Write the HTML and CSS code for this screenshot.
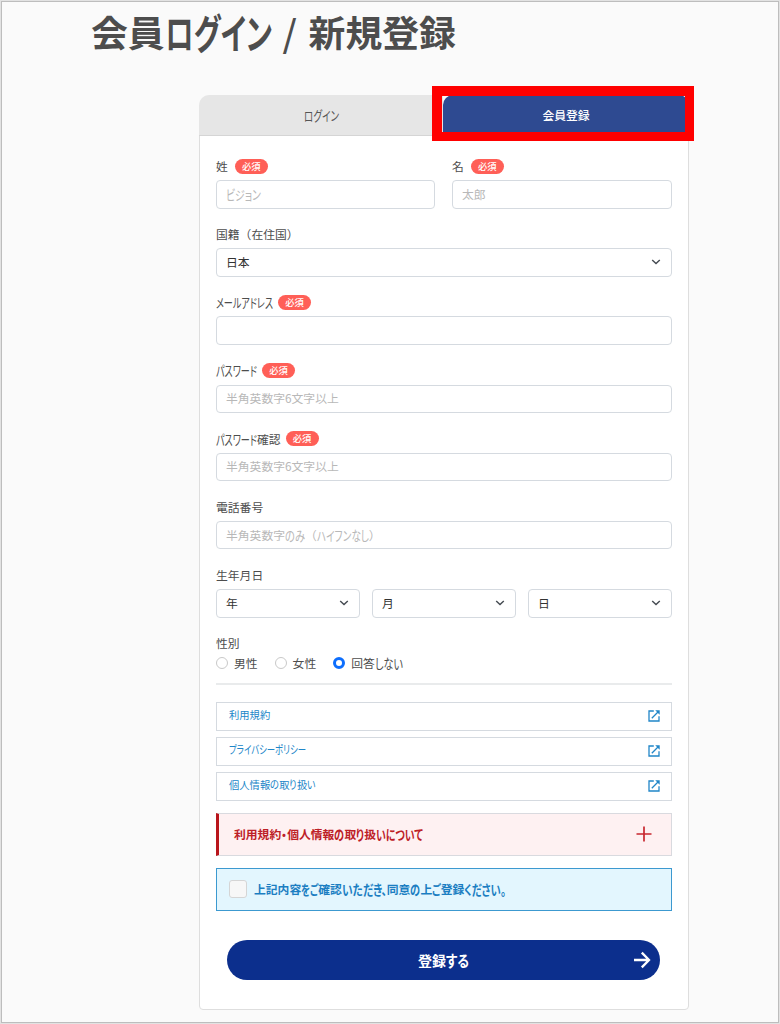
FILE: index.html
```html
<!DOCTYPE html>
<html lang="ja">
<head>
<meta charset="utf-8">
<title>会員ログイン / 新規登録</title>
<link rel="stylesheet" href="styles.css">
</head>
<body>
<svg class="defs" aria-hidden="true">
  <symbol id="chev" viewBox="0 0 10 6"><path d="M1.2 1 5 4.6 8.8 1" fill="none" stroke="#454b52" stroke-width="1.4"/></symbol>
  <symbol id="ext" viewBox="0 0 12 12"><path d="M5.8 1H1v10h10V6.2M3.8 8.2 10 2" fill="none" stroke="#2186c8" stroke-width="1.3"/><path d="M7.2.3h4.5v4.5L10.4 3.5 8.5 1.6z" fill="#2186c8"/></symbol>
</svg>
<main class="page">
  <h1 class="title">会員<span class="k" data-w="107">ログイン</span><span class="slash">/</span>新規登録</h1>
  <div class="card">
    <nav class="tabs">
      <a class="tab"><span class="k" data-w="35">ログイン</span></a>
      <a class="tab active">会員登録</a>
      <div class="highlight"></div>
    </nav>
    <form class="form">
      <div class="row name">
        <div><label class="label">姓<b class="badge">必須</b></label><div class="input ph"><span class="k" data-w="35">ビジョン</span></div></div>
        <div><label class="label">名<b class="badge">必須</b></label><div class="input ph">太郎</div></div>
      </div>
      <div class="row"><label class="label">国籍（在住国）</label><div class="input">日本<svg class="chev"><use href="#chev"/></svg></div></div>
      <div class="row"><label class="label"><span class="k" data-w="57">メールアドレス</span><b class="badge tight">必須</b></label><div class="input"></div></div>
      <div class="row"><label class="label"><span class="k" data-w="41">パスワード</span><b class="badge tight">必須</b></label><div class="input ph">半角英数字6文字以上</div></div>
      <div class="row"><label class="label"><span class="k" data-w="41">パスワード</span>確認<b class="badge tight">必須</b></label><div class="input ph">半角英数字6文字以上</div></div>
      <div class="row"><label class="label">電話番号</label><div class="input ph">半角英数字<span class="k" data-w="20">のみ</span>（<span class="k" data-w="52">ハイフンなし</span>）</div></div>
      <div class="row"><label class="label">生年月日</label>
        <div class="dates">
          <div class="input">年<svg class="chev"><use href="#chev"/></svg></div>
          <div class="input">月<svg class="chev"><use href="#chev"/></svg></div>
          <div class="input">日<svg class="chev"><use href="#chev"/></svg></div>
        </div>
      </div>
      <label class="label">性別</label>
      <div class="radios">
        <span class="radio"><i></i>男性</span>
        <span class="radio"><i></i>女性</span>
        <span class="radio on"><i></i>回答<span class="k" data-w="28">しない</span></span>
      </div>
      <div class="rule"></div>
      <div class="links">
        <a>利用規約<svg class="ext"><use href="#ext"/></svg></a>
        <a><span class="k" data-w="77">プライバシーポリシー</span><svg class="ext"><use href="#ext"/></svg></a>
        <a>個人情報<span class="k" data-w="9">の</span>取<span class="k" data-w="7.5">り</span>扱<span class="k" data-w="8.5">い</span><svg class="ext"><use href="#ext"/></svg></a>
      </div>
      <div class="notice">利用規約<span class="k" data-w="6">・</span>個人情報<span class="k" data-w="10">の</span>取<span class="k" data-w="8">り</span>扱<span class="k" data-w="47">いについて</span><svg class="plus" viewBox="0 0 16 16"><path d="M8 .5v15M.5 8h15" stroke="#c8272f" stroke-width="1.7"/></svg></div>
      <div class="agree"><i class="box"></i>上記内容<span class="k" data-w="17">をご</span>確認<span class="k" data-w="45">いただき、</span>同意<span class="k" data-w="10">の</span>上<span class="k" data-w="8.5">ご</span>登録<span class="k" data-w="42">ください。</span></div>
      <div class="submit">登録<span class="k" data-w="23">する</span><svg class="arrow" viewBox="0 0 18 18"><path d="M1 9h15M8.8 1.6 16 9l-7.2 7.4" fill="none" stroke="#fff" stroke-width="2.3"/></svg></div>
    </form>
  </div>
</main>
<script src="kana.js"></script>
</body>
</html>
```
FILE: kana.js
```js
document.querySelectorAll('.k').forEach(function (el) {
  var target = parseFloat(el.dataset.w);
  var natural = el.getBoundingClientRect().width;
  el.style.width = target + 'px';
  el.style.transform = 'scale(' + target / natural + ', 1.12)';
});
```
FILE: styles.css
```css
* { box-sizing: border-box; }
body { margin: 0; background: #fafafa; color: #4d4d4d; font: 11.8px/16px "Noto Sans CJK JP", sans-serif; white-space: nowrap; }
.defs { position: absolute; width: 0; height: 0; }
.k { display: inline-block; transform-origin: 0 52%; font-feature-settings: "palt"; }
.page { width: 780px; height: 1024px; border: 1px solid #e2e2e2; outline: 1px solid #bdbdbd; outline-offset: -2px; overflow: hidden; border-right-width: 2px; }
.title { margin: 4px 0 0 90px; height: 53px; font-size: 36.8px; line-height: 52px; font-weight: 700; }
.slash { display: inline-block; width: 37px; padding-left: 11px; font-weight: 500; }
.card { width: 490px; height: 915px; margin: 37px 0 0 198px; border: 1px solid #dedede; border-radius: 12px 12px 4px 4px; background: #fff; }
.tabs { position: relative; display: flex; height: 41px; margin: -1px -1px 0; background: #fafafa; border-radius: 10px 10px 0 0; }
.tab { width: 244px; display: flex; align-items: center; justify-content: center; background: #e6e6e6; border-radius: 10px 0 0; border-bottom: 1px solid #d5d5d5; color: #555; }
.tab.active { flex: 1; background: #2e4a91; border-radius: 10px 10px 0 0; color: #fff; font-weight: 500; }
.highlight { position: absolute; left: 233px; top: -9px; width: 262px; height: 55px; border: 10px solid #f00; border-bottom-width: 9px; border-right-width: 9px; }
.form { padding: 22px 16px 0; }
.row { height: 68.15px; }
.row.name { display: grid; grid-template-columns: 219px 220px; gap: 17px; }
.label { display: flex; align-items: center; height: 16px; margin-bottom: 6.1px; }
.badge { width: 33px; height: 15px; margin-left: 7px; border-radius: 8px; background: #ff5f57; color: #fff; font-size: 9.3px; line-height: 15px; font-weight: 500; text-align: center; }
.badge.tight { margin-left: 5px; }
.input { display: flex; align-items: center; height: 28.6px; padding: 0 10px 1px 9px; border: 1px solid #d5dae0; border-radius: 4px; color: #333; background: #fff; }
.ph { color: #b8b8b8; }
.chev { width: 10px; height: 6px; margin-left: auto; }
.dates { display: grid; grid-template-columns: repeat(3, 1fr); gap: 12px; }
.radios { display: flex; height: 16px; margin-top: -2px; gap: 17px; }
.radio { display: flex; align-items: center; }
.radio i { width: 12px; height: 12px; margin-right: 6px; border: 1px solid #c9c9c9; border-radius: 50%; }
.radio.on i { border: 3.8px solid #0d6efd; }
.rule { height: 1.5px; margin-top: 12px; background: #e9ebec; }
.links { display: grid; gap: 6px; margin-top: 17.3px; }
.links a { display: flex; align-items: center; height: 29px; padding: 0 11px 2px 12px; border: 1px solid #d5dae0; color: #2186c8; font-size: 10.3px; }
.ext { width: 12px; height: 12px; margin: 2px 0 0 auto; }
.notice { display: flex; align-items: center; height: 43px; margin-top: 12px; padding: 0 19px 0 15px; border: 1px solid #d9dadf; border-left: 3px solid #b9151b; background: #fef1f2; color: #bd2026; font-weight: 700; }
.plus { width: 16px; height: 16px; margin-left: auto; }
.agree { display: flex; align-items: center; height: 43px; margin-top: 12px; padding-left: 12px; border: 1px solid #3c99d0; background: #e3f6fe; color: #1b7ec2; font-weight: 700; }
.box { width: 18px; height: 18px; margin-right: 7px; border: 1px solid #d5d5d5; border-radius: 3px; background: #f7f7f7; }
.submit { position: relative; display: flex; align-items: center; justify-content: center; height: 40px; margin: 29.5px 12px 0 11px; border-radius: 20px; background: #0c2f8d; color: #fff; font-size: 14px; font-weight: 700; }
.arrow { position: absolute; right: 9px; top: 11px; width: 18px; height: 18px; }
```
